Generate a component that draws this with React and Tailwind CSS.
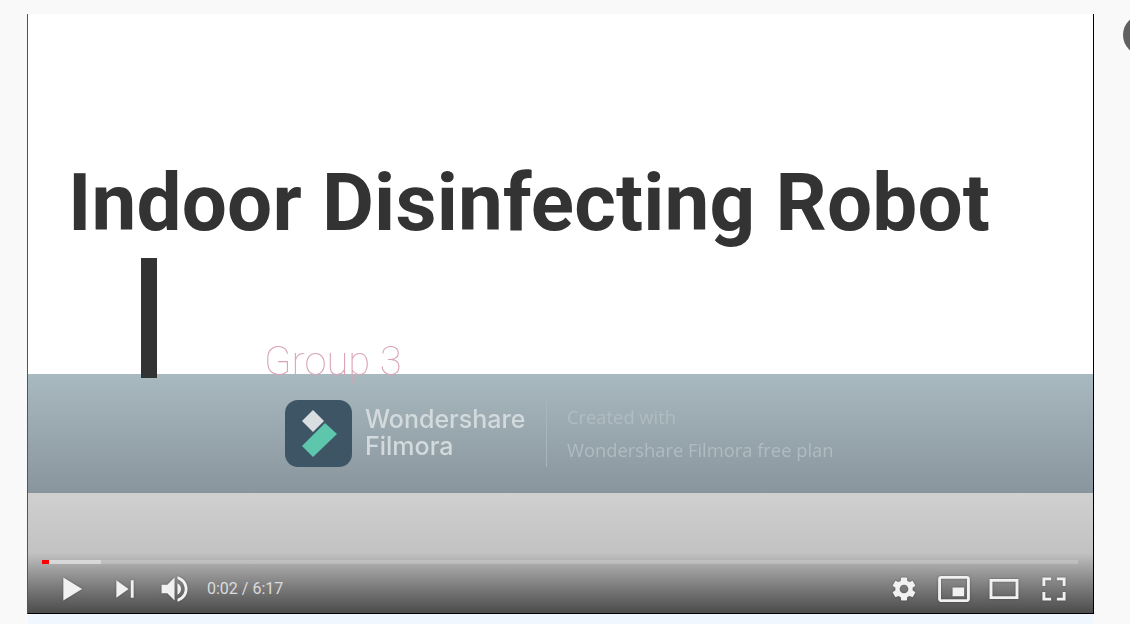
import React from 'react';

function Icon({ children }) {
  return (
    <svg viewBox="0 0 36 36" fill="#f1f1f1" fillRule="evenodd" className="w-[52px] h-[52px] shrink-0 drop-shadow-[0_0_1px_rgba(0,0,0,0.3)]">
      {children}
    </svg>
  );
}

function Btn({ className = 'w-[50px]', children }) {
  return <div className={`h-[48px] flex items-center justify-center shrink-0 ${className}`}><Icon>{children}</Icon></div>;
}

export default function App() {
  return (
    <div className="w-[1130px] h-[624px] overflow-hidden bg-[#f9f9f9] pt-[14px] pl-[27px] flex font-['Roboto',sans-serif]">
      <div className="w-[1067px] shrink-0 flex flex-col">
        {/* video frame */}
        <div className="relative h-[600px] shrink-0 overflow-hidden flex flex-col bg-white border-l border-l-[#555] border-r border-r-black border-b border-b-black">
          {/* title slide */}
          <div className="relative z-10 h-[360px] shrink-0 pt-[146px] pl-[40px]">
            <div className="text-[80px] leading-[86px] font-bold text-[#333] whitespace-nowrap tracking-[0.16px] blur-[0.4px]">Indoor Disinfecting Robot</div>
            <div className="flex items-start mt-[12px] pl-[73px]">
              <div className="w-[16px] h-[120px] bg-[#333] shrink-0 blur-[0.3px]"></div>
              <div className="ml-[107px] mt-[81px] text-[40px] leading-[46px] font-thin text-[#d9a3b5] whitespace-nowrap blur-[0.2px]">Group 3</div>
            </div>
          </div>

          {/* watermark band */}
          <div className="h-[119px] shrink-0 bg-gradient-to-b from-[#a9b9c0] to-[#89959c] flex items-center pl-[257px] pb-px">
            <svg viewBox="0 0 67 67" className="w-[67px] h-[67px] shrink-0 blur-[0.4px]">
              <rect width="67" height="67" rx="13" fill="#3e5565" />
              <polygon points="28,10 39,21 28,32 17,21" fill="#d9dee0" />
              <polygon points="40,23 52,34 28,57 17,46" fill="#5ec6ad" />
            </svg>
            <div className="ml-[13px] w-[181px] font-['Inter',sans-serif] font-medium text-[25px] leading-[27px] text-[#d3dadd] blur-[0.4px]">
              <div>Wondershare</div>
              <div>Filmora</div>
            </div>
            <div className="w-px h-[67px] bg-[#a8b5bb] shrink-0"></div>
            <div className="ml-[20px] font-['Open_Sans',sans-serif] text-[18.35px] text-[#b0bcc2] whitespace-nowrap blur-[0.4px]">
              <div className="leading-[33px]">Created with</div>
              <div className="leading-[33px]">Wondershare Filmora free plan</div>
            </div>
          </div>

          {/* below the band */}
          <div className="flex-1 bg-gradient-to-b from-[#d0d0d0] to-[#b4b4b4]"></div>

          {/* player controls */}
          <div className="absolute left-0 right-0 bottom-0 h-[60px] bg-gradient-to-b from-transparent to-[#4c4c4c]"></div>
          <div className="absolute left-[14px] right-[15px] bottom-[49px] h-[4px] flex bg-[#ffffff33]">
            <div className="w-[7px] bg-[#ff0000]"></div>
            <div className="w-[52px] bg-[#ffffff66]"></div>
          </div>
          <div className="absolute left-0 right-0 bottom-0 h-[48px] flex items-center pl-[16px] pr-[14px]">
            <Btn className="w-[55px]">
              <path d="M12 26 18.5 22 18.5 14 12 10z M18.5 22 25 18 25 18 18.5 14z" />
            </Btn>
            <Btn className="w-[50px] pl-[2px]">
              <path d="M12 24 20.5 18 12 12V24z M22 12v12h2V12h-2z" />
            </Btn>
            <Btn className="w-[53px]">
              <path d="M8 21 12 21 17 26 17 10 12 15 8 15 8 21Z M19 14 19 22C20.48 21.32 21.5 19.77 21.5 18 21.5 16.26 20.48 14.74 19 14Z M19 11.29C21.89 12.15 24 14.83 24 18 24 21.17 21.89 23.85 19 24.71L19 26.77C23.01 25.86 26 22.28 26 18 26 13.72 23.01 10.14 19 9.23L19 11.29Z" />
            </Btn>
            <div className="ml-[5px] text-[16px] text-[#dcdcdc] whitespace-nowrap">0:02 / 6:17</div>
            <div className="flex-1"></div>
            <Btn>
              <path d="M23.94 18.78c.03-.25.05-.51.05-.78s-.02-.53-.05-.78l1.69-1.32c.15-.12.19-.34.1-.51l-1.6-2.77c-.1-.18-.31-.24-.49-.18l-1.99.8c-.42-.32-.86-.58-1.35-.78L20 10.34c-.03-.19-.2-.34-.4-.34h-3.2c-.2 0-.37.15-.4.34l-.3 2.12c-.49.2-.94.47-1.35.78l-1.99-.8c-.18-.07-.39 0-.49.18l-1.6 2.77c-.1.18-.06.39.1.51l1.69 1.32c-.03.25-.05.52-.05.78s.02.53.05.78l-1.69 1.32c-.15.12-.19.34-.1.51l1.6 2.77c.1.18.31.24.49.18l1.99-.8c.42.32.86.58 1.35.78l.3 2.12c.03.19.2.34.4.34h3.2c.2 0 .37-.15.4-.34l.3-2.12c.49-.2.94-.47 1.35-.78l1.99.8c.18.07.39 0 .49-.18l1.6-2.77c.1-.18.06-.39-.1-.51l-1.67-1.32zM18 21c-1.66 0-3-1.34-3-3s1.34-3 3-3 3 1.34 3 3-1.34 3-3 3z" />
            </Btn>
            <Btn>
              <path d="M25 17H17V23H25V17Z M29 25V10.98C29 9.88 28.1 9 27 9H9C7.9 9 7 9.88 7 10.98V25C7 26.1 7.9 27 9 27H27C28.1 27 29 26.1 29 25Z M27 25.02H9V10.97H27V25.02Z" />
            </Btn>
            <Btn>
              <path d="M28 11V25H8V11Z M10 13H26V23H10Z" />
            </Btn>
            <Btn>
              <path d="M10 16h2v-4h4v-2H10v6z M20 10v2h4v4h2V10h-6z M24 24h-4v2h6v-6h-2v4z M12 20H10v6h6v-2h-4v-4z" />
            </Btn>
          </div>
        </div>
        {/* pale strip under the player */}
        <div className="h-[10px] ml-px bg-[#f1f7fe]"></div>
      </div>
      <div className="ml-[29px] shrink-0 pt-[1px]">
        <div className="w-[40px] h-[40px] rounded-full bg-[#606060]"></div>
      </div>
    </div>
  );
}
